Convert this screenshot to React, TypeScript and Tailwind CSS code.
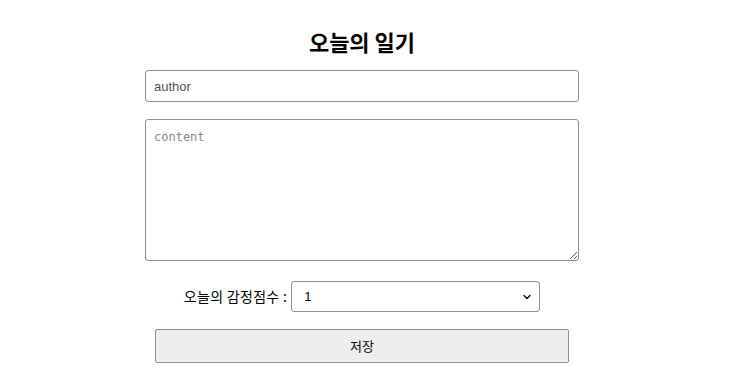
import { ChevronDown } from "lucide-react";

export default function App() {
  return (
    <div className="w-[724px] bg-white text-black font-['Liberation_Sans','Noto_Sans_CJK_KR',sans-serif]">
      <div className="flex flex-col items-center">
        {/* 제목 */}
        <h2 className="mt-[26px] text-[22px] leading-[30px] font-bold font-['Noto_Sans_CJK_KR',sans-serif]">
          오늘의 일기
        </h2>

        <input
          name="author"
          placeholder="author"
          className="mt-[14px] w-[434px] h-[32px] px-[8px] text-[13px] border border-[#8f8f8f] rounded-[3px] placeholder:text-[#505050] outline-none"
        />

        <textarea
          name="content"
          placeholder="content"
          className="mt-[17px] w-[434px] h-[142px] px-[8px] py-[8px] text-[12px] font-['DejaVu_Sans_Mono',monospace] border border-[#8f8f8f] rounded-[3px] placeholder:text-[#8a8a8a] outline-none"
        />

        {/* 감정점수 */}
        <div className="mt-[20px] flex items-center gap-[4px]">
          <span className="text-[14px] tracking-[0.3px] font-['Noto_Sans_CJK_KR',sans-serif]">오늘의 감정점수 :</span>
          <div className="relative">
            <select
              name="emotion"
              defaultValue="1"
              className="appearance-none w-[249px] h-[31px] pl-[12px] text-[13px] border border-[#8f8f8f] rounded-[3px] bg-white outline-none"
            >
              <option value="1">1</option>
              <option value="2">2</option>
              <option value="3">3</option>
              <option value="4">4</option>
              <option value="5">5</option>
            </select>
            <ChevronDown className="absolute right-[7px] top-[10px] w-[12px] h-[12px] pointer-events-none" strokeWidth={2.5} />
          </div>
        </div>

        <button className="mt-[17px] w-[414px] h-[34px] text-[13px] bg-[#efefef] border border-[#8f8f8f] rounded-[2px] font-['Noto_Sans_CJK_KR',sans-serif]">
          저장
        </button>
      </div>
    </div>
  );
}
